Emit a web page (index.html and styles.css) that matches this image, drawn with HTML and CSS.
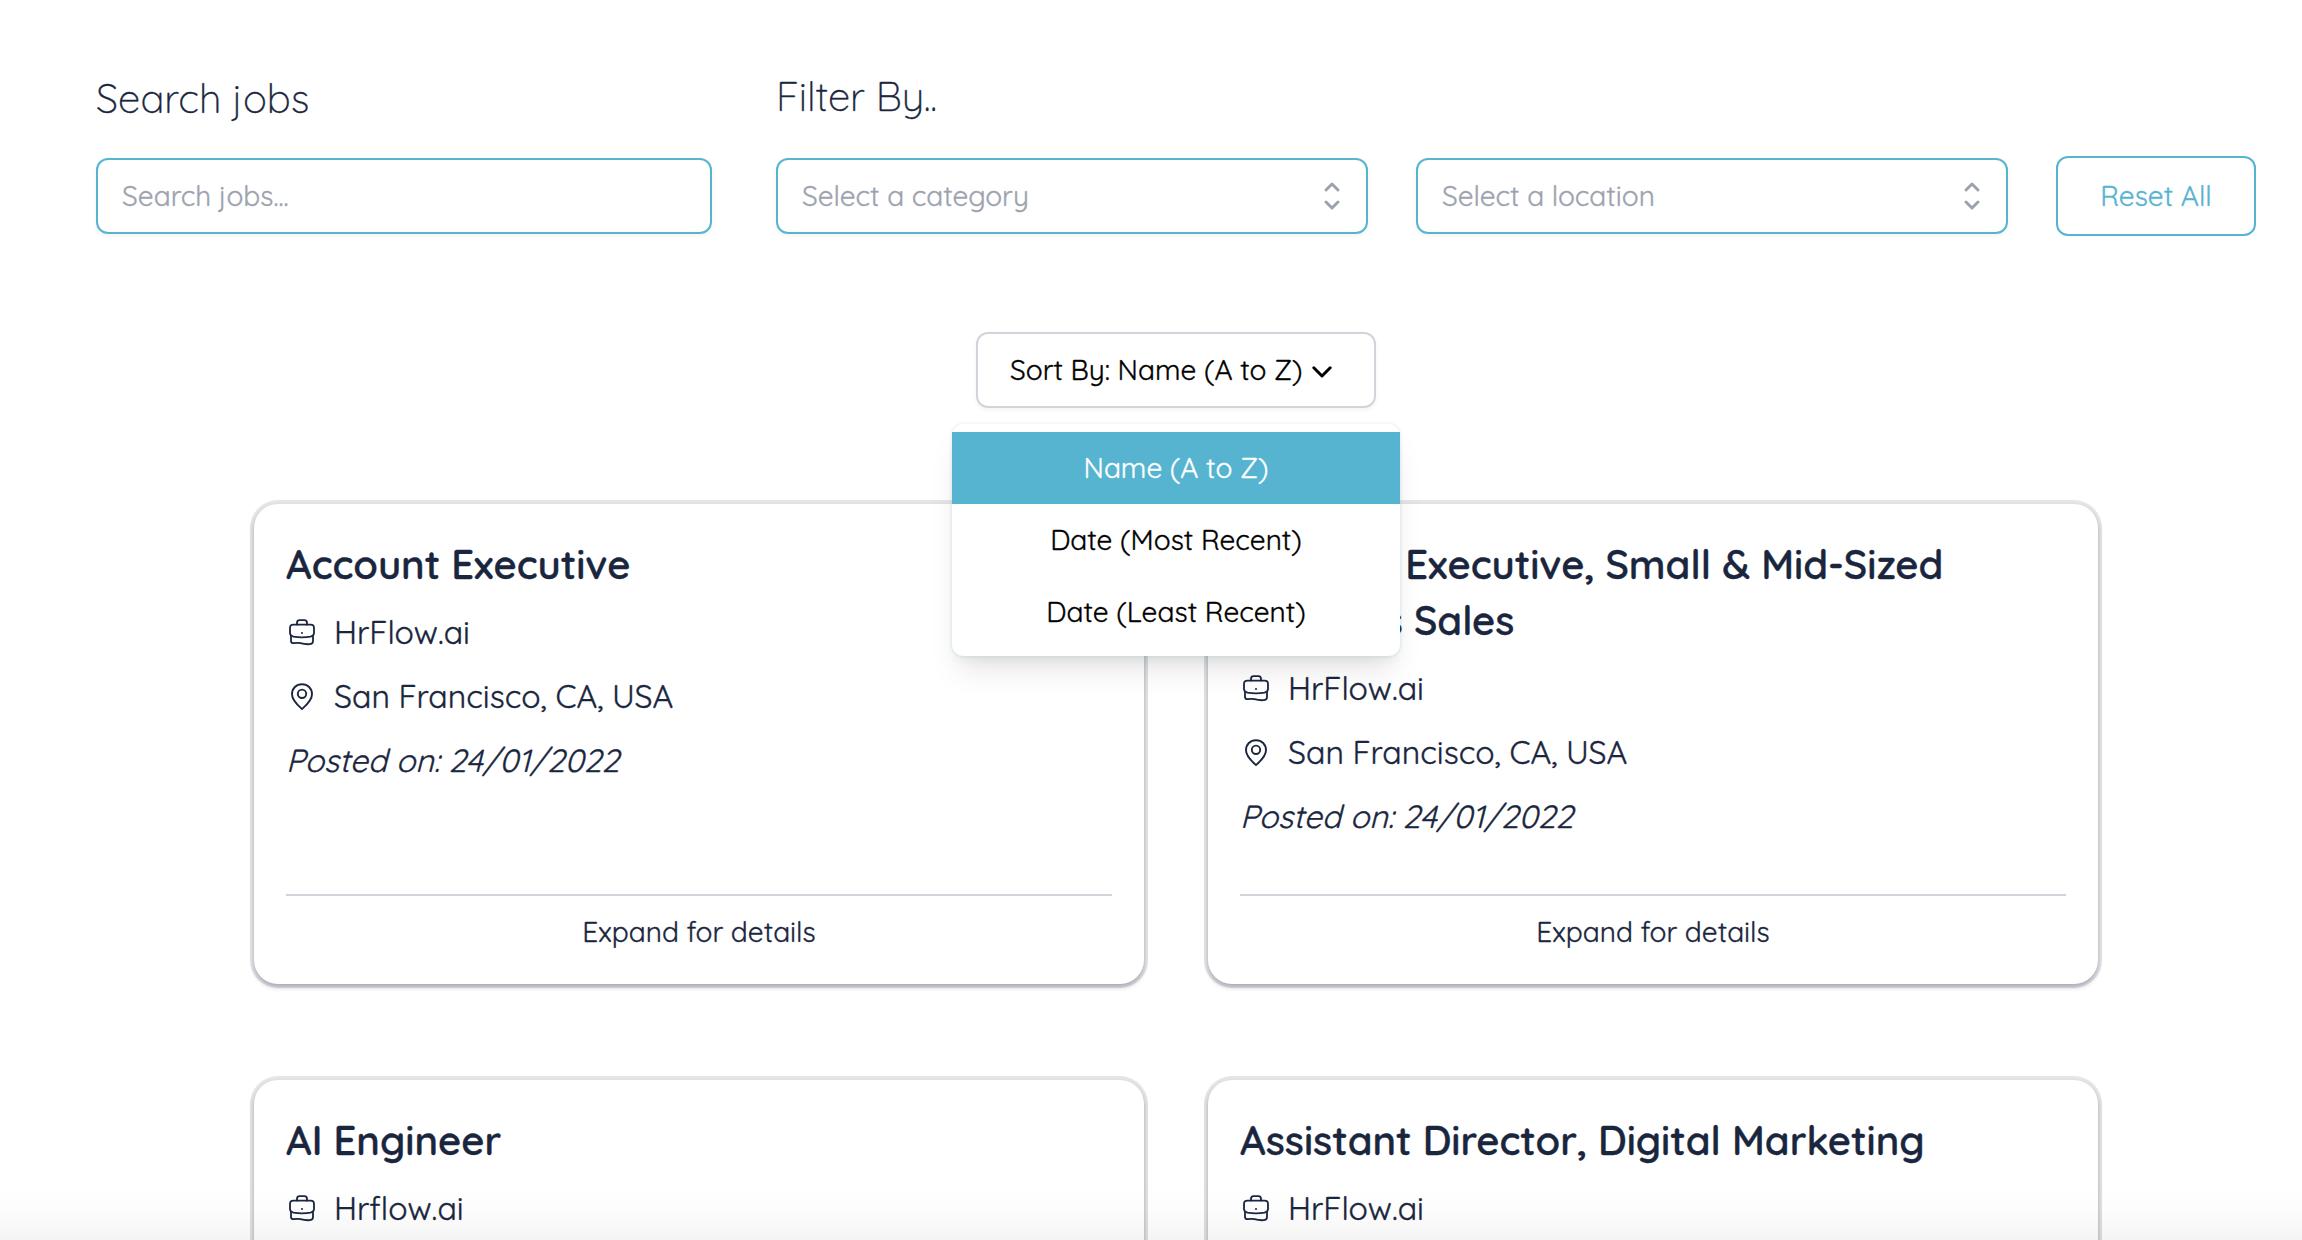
FILE: index.html
```html
<!DOCTYPE html>
<html lang="en">
<head>
<meta charset="utf-8">
<title>Jobs</title>
<link rel="stylesheet" href="styles.css">
</head>
<body>
<svg class="sprite" aria-hidden="true">
  <symbol id="selector" viewBox="0 0 20 20"><path d="M7 7l3-3 3 3m0 6l-3 3-3-3" fill="none" stroke="currentColor" stroke-width="1.5" stroke-linecap="round" stroke-linejoin="round"/></symbol>
  <symbol id="briefcase" viewBox="0 0 32 32"><g fill="none" stroke="currentColor" stroke-width="1.8" stroke-linecap="round" stroke-linejoin="round"><path d="M7.5 8.7H24.5Q28 8.7 28 12V17Q28 19.8 24.5 20.6Q16 22.2 7.5 20.6Q4 19.8 4 17V12Q4 8.7 7.5 8.7Z"/><path d="M11 8.5V7Q11 4.2 13.5 4.2H18.5Q21 4.2 21 7V8.5M5 20.5V25Q5 27.2 7.5 27.2Q11 26.7 14.5 27.2Q18.5 28.4 23.5 28.2Q27 28.2 27 25V20.5"/></g><circle cx="16" cy="17" r="1" fill="currentColor"/></symbol>
  <symbol id="pin" viewBox="0 0 32 32"><g fill="none" stroke="currentColor" stroke-width="1.9" stroke-linecap="round" stroke-linejoin="round"><path d="M16 29C12 25.5 6 20.5 6 14.2C6 8.2 10.3 4.2 16 4.2S26 8.2 26 14.2C26 20.5 20 25.5 16 29Z"/><circle cx="16" cy="13.8" r="4.2"/></g></symbol>
</svg>
<main class="page">
  <form class="filters">
    <div class="search">
      <label class="label label-search" for="q">Search jobs</label>
      <div class="field"><input class="input" id="q" placeholder="Search jobs..."></div>
    </div>
    <div class="filter">
      <div class="label label-filter">Filter By..</div>
      <div class="filter-row">
        <div class="field select"><span>Select a category</span><svg class="icon-lg"><use href="#selector"/></svg></div>
        <div class="field select"><span>Select a location</span><svg class="icon-lg"><use href="#selector"/></svg></div>
        <button class="reset" type="button">Reset All</button>
      </div>
    </div>
  </form>

  <div class="sort">
    <button class="sort-button" type="button"><span>Sort By: Name (A to Z)</span>
      <svg class="icon-lg sort-chevron" viewBox="0 0 20 20" fill="none" stroke="currentColor" stroke-width="1.5" stroke-linecap="round" stroke-linejoin="round"><path d="M5.9 7.9L10 12l4.1-4.1"/></svg>
    </button>
    <ul class="menu">
      <li class="menu-item active">Name (A to Z)</li>
      <li class="menu-item">Date (Most Recent)</li>
      <li class="menu-item">Date (Least Recent)</li>
    </ul>
  </div>

  <section class="cards">
    <article class="card">
      <h2 class="title">Account Executive</h2>
      <p class="row"><svg class="icon"><use href="#briefcase"/></svg><span>HrFlow.ai</span></p>
      <p class="row"><svg class="icon"><use href="#pin"/></svg><span>San Francisco, CA, USA</span></p>
      <p class="row posted">Posted on: 24/01/2022</p>
      <div class="expand">Expand for details</div>
    </article>
    <article class="card">
      <h2 class="title">Account Executive, Small &amp; Mid-Sized Business Sales</h2>
      <p class="row"><svg class="icon"><use href="#briefcase"/></svg><span>HrFlow.ai</span></p>
      <p class="row"><svg class="icon"><use href="#pin"/></svg><span>San Francisco, CA, USA</span></p>
      <p class="row posted">Posted on: 24/01/2022</p>
      <div class="expand">Expand for details</div>
    </article>
    <article class="card">
      <h2 class="title">AI Engineer</h2>
      <p class="row"><svg class="icon"><use href="#briefcase"/></svg><span>Hrflow.ai</span></p>
    </article>
    <article class="card">
      <h2 class="title">Assistant Director, Digital Marketing</h2>
      <p class="row"><svg class="icon"><use href="#briefcase"/></svg><span>HrFlow.ai</span></p>
    </article>
  </section>
  <div class="fade"></div>
</main>
</body>
</html>
```
FILE: styles.css
```css
* { box-sizing: border-box; }
body {
  margin: 0;
  background: #fff;
  color: #1a263e;
  font-family: Quicksand, Lato, sans-serif;
  font-size: 28px;
  line-height: 40px;
  -webkit-text-stroke: .35px currentColor;
}
h2, p, ul { margin: 0; padding: 0; }
button, input { font: inherit; letter-spacing: inherit; }
.sprite { position: absolute; width: 0; height: 0; }
.page { position: relative; width: 2302px; height: 1240px; overflow: hidden; }

.filters { display: flex; gap: 64px; padding: 68px 46px 0 96px; }
.search { width: 616px; }
.label { display: block; height: 56px; font-size: 40px; font-weight: 300; line-height: 56px; }
.label-search { margin: 2px 0 32px; }
.label-filter { margin-bottom: 32px; }
.field {
  height: 76px;
  border: 2px solid #57b4d1;
  border-radius: 12px;
  color: #9ca3af;
  box-shadow: 0 2px 4px rgba(0, 0, 0, .05);
}
.input { display: block; width: 100%; height: 71px; padding: 0 24px; border: 0; background: none; outline: 0; }
.input::placeholder { color: #9ca3af; opacity: 1; }
.filter-row { display: flex; align-items: center; gap: 48px; }
.select { display: flex; align-items: center; justify-content: space-between; width: 592px; padding: 0 14px 0 24px; }
.icon-lg { flex: none; width: 40px; height: 40px; }
.reset { width: 200px; height: 80px; border: 2px solid #57b4d1; border-radius: 12px; background: #fff; color: #57b4d1; }
.filter { width: 1480px; }

.sort { position: relative; display: flex; justify-content: center; width: 400px; margin: 96px 0 0 976px; }
.sort-button {
  display: flex; align-items: center; justify-content: space-between;
  width: 400px; height: 76px; padding: 0 32px;
  border: 2px solid #d1d5db; border-radius: 12px;
  background: #fff; color: #000;
  white-space: nowrap;
  box-shadow: 0 2px 4px rgba(0, 0, 0, .05);
}
.sort-chevron { margin: 4px 0 0 -8px; }
.menu {
  position: absolute; z-index: 2; top: 92px; left: -24px;
  width: 448px; padding: 8px 0; list-style: none;
  border-radius: 12px; background: #fff; color: #000; text-align: center;
  box-shadow: 0 0 0 2px rgba(87, 180, 209, .08), 0 20px 30px -6px rgba(0, 0, 0, .1), 0 8px 12px -4px rgba(0, 0, 0, .06);
}
.menu-item { height: 72px; line-height: 72px; }
.active { background: #57b4d1; color: #fff; }

.cards { display: grid; grid-template-columns: 890px 890px; grid-auto-rows: 480px; gap: 96px 64px; margin: 96px 0 0 254px; }
.card {
  display: flex; flex-direction: column; gap: 16px;
  padding: 32px; border-radius: 24px; background: #fff;
  box-shadow: 0 0 0 4px rgba(20, 24, 36, .11), 0 3px 5px rgba(30, 30, 70, .31);
}
.title { font-size: 40px; font-weight: 600; line-height: 56px; }
.row { display: flex; align-items: center; gap: 16px; height: 48px; font-size: 32px; line-height: 48px; }
.icon { width: 32px; height: 32px; }
.posted { font-style: italic; }
.expand { margin-top: auto; padding-top: 16px; border-top: 2px solid #d1d5db; text-align: center; height: 58px; }

.fade { position: absolute; z-index: 3; left: 0; right: 0; bottom: 0; height: 56px; background: linear-gradient(rgba(0, 0, 0, 0), rgba(0, 0, 0, .012) 50%, rgba(0, 0, 0, .045)); }
```
